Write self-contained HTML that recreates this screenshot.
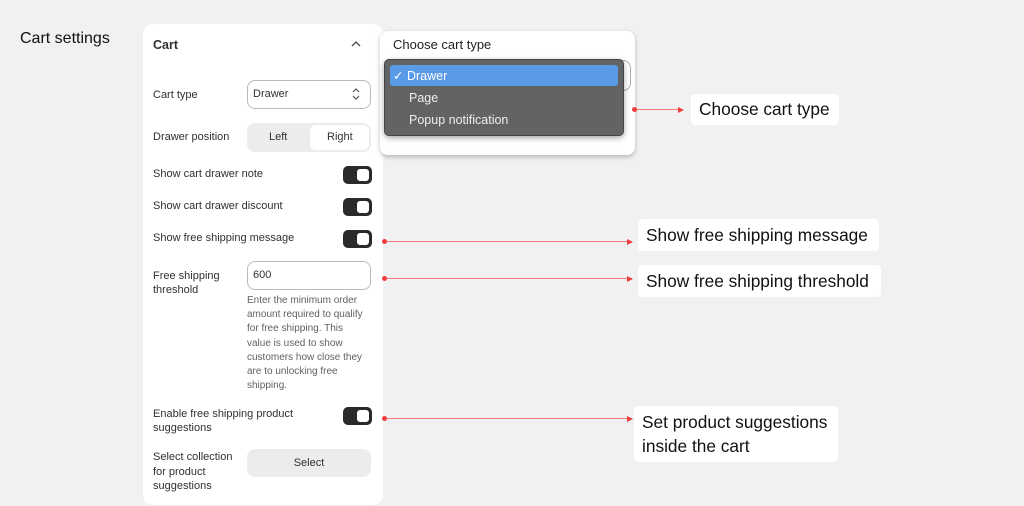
<!DOCTYPE html>
<html><head><style>
*{margin:0;padding:0;box-sizing:border-box}
body{width:1024px;height:506px;background:#f1f1f1;font-family:"Liberation Sans",sans-serif;position:relative;overflow:hidden;color:#303030}
.a{position:absolute}
.t{font-size:11px;color:#303030}
.panel{left:143px;top:24px;width:240px;height:481px;background:#fff;border-radius:10px}
.tog{width:29px;height:18px;background:#2a2a2a;border-radius:5px}
.tog::after{content:"";position:absolute;right:3px;top:3px;width:12px;height:12px;background:#fff;border-radius:3px}
.call{background:#fff;border-radius:4px;font-size:17.3px;color:#111;padding:0 8px;line-height:24px}
.line{height:1.5px;background:#f47c7c}
.dot{width:5px;height:5px;border-radius:50%;background:#f03c3c}
.arr{width:0;height:0;border-left:6px solid #f03c3c;border-top:3px solid transparent;border-bottom:3px solid transparent}
</style></head><body>
<div class="a" style="left:20px;top:30px;font-size:16px;color:#111">Cart settings</div>
<div class="a panel"></div>
<div class="a" style="left:153px;top:38px;font-size:12.5px;font-weight:bold;color:#303030">Cart</div>
<svg class="a" style="left:351px;top:40px" width="10" height="8"><path d="M1 6 L5 2 L9 6" stroke="#555" stroke-width="1.5" fill="none"/></svg>
<div class="a t" style="left:153px;top:89px">Cart type</div>
<div class="a" style="left:247px;top:80px;width:124px;height:29px;border:1px solid #bbb;border-radius:8px;font-size:11px;padding:0 5px;line-height:27px">Drawer</div>
<svg class="a" style="left:352px;top:87px" width="8" height="14"><path d="M1 5 L4 2 L7 5 M1 9 L4 12 L7 9" stroke="#555" stroke-width="1.2" fill="none"/></svg>
<div class="a t" style="left:153px;top:131px">Drawer position</div>
<div class="a" style="left:247px;top:123px;width:124px;height:29px;background:#ececec;border-radius:8px"></div>
<div class="a" style="left:310px;top:125px;width:59px;height:25px;background:#fff;border-radius:6px"></div>
<div class="a t" style="left:269px;top:131px">Left</div>
<div class="a t" style="left:327px;top:131px">Right</div>
<div class="a t" style="left:153px;top:168px">Show cart drawer note</div>
<div class="a tog" style="left:343px;top:166px"></div>
<div class="a t" style="left:153px;top:200px">Show cart drawer discount</div>
<div class="a tog" style="left:343px;top:198px"></div>
<div class="a t" style="left:153px;top:232px">Show free shipping message</div>
<div class="a tog" style="left:343px;top:230px"></div>
<div class="a t" style="left:153px;top:269px;line-height:14px">Free shipping<br>threshold</div>
<div class="a" style="left:247px;top:261px;width:124px;height:29px;border:1px solid #bbb;border-radius:8px;font-size:11px;padding:0 5px;line-height:27px">600</div>
<div class="a" style="left:247px;top:294px;width:135px;font-size:10px;line-height:14.2px;color:#616161;white-space:nowrap">Enter the minimum order<br>amount required to qualify<br>for free shipping. This<br>value is used to show<br>customers how close they<br>are to unlocking free<br>shipping.</div>
<div class="a t" style="left:153px;top:407px;line-height:14px">Enable free shipping product<br>suggestions</div>
<div class="a tog" style="left:343px;top:407px"></div>
<div class="a t" style="left:153px;top:450px;line-height:14.5px">Select collection<br>for product<br>suggestions</div>
<div class="a" style="left:247px;top:449px;width:124px;height:28px;background:#ececec;border-radius:8px;font-size:11px;text-align:center;line-height:28px">Select</div>

<div class="a" style="left:380px;top:31px;width:255px;height:124px;background:#fff;border-radius:8px;box-shadow:0 2px 5px rgba(0,0,0,.25)"></div>
<div class="a" style="left:393px;top:37px;font-size:13px;color:#222">Choose cart type</div>
<div class="a" style="left:388px;top:60px;width:243px;height:31px;border:1px solid #aaa;border-radius:8px"></div>
<div class="a" style="left:384px;top:59px;width:240px;height:77px;background:#616365;border:1px solid #444;border-radius:5px;box-shadow:0 2px 6px rgba(0,0,0,.35)"></div>
<div class="a" style="left:390px;top:65px;width:228px;height:21px;background:#5a9be8;border-radius:3px"></div>
<div class="a" style="left:393px;top:68px;font-size:12.5px;color:#fff">✓ Drawer</div>
<div class="a" style="left:409px;top:91px;font-size:12.5px;color:#eee">Page</div>
<div class="a" style="left:409px;top:113px;font-size:12.5px;color:#eee">Popup notification</div>

<div class="a line" style="left:636px;top:108.5px;width:44px"></div><div class="a dot" style="left:632px;top:107px"></div><div class="a arr" style="left:678px;top:106.5px"></div>
<div class="a line" style="left:384px;top:240.5px;width:248px"></div><div class="a dot" style="left:382px;top:239px"></div><div class="a arr" style="left:627px;top:238.5px"></div>
<div class="a line" style="left:384px;top:277.5px;width:248px"></div><div class="a dot" style="left:382px;top:276px"></div><div class="a arr" style="left:627px;top:275.5px"></div>
<div class="a line" style="left:384px;top:417.5px;width:248px"></div><div class="a dot" style="left:382px;top:416px"></div><div class="a arr" style="left:627px;top:415.5px"></div>

<div class="a call" style="left:691px;top:94px;width:148px;height:31px;padding-top:3px">Choose cart type</div>
<div class="a call" style="left:638px;top:219px;width:241px;height:32px;padding-top:4px">Show free shipping message</div>
<div class="a call" style="left:638px;top:265px;width:243px;height:32px;padding-top:4px">Show free shipping threshold</div>
<div class="a call" style="left:634px;top:406px;width:204px;height:56px;padding-top:4px">Set product suggestions<br>inside the cart</div>
</body></html>
